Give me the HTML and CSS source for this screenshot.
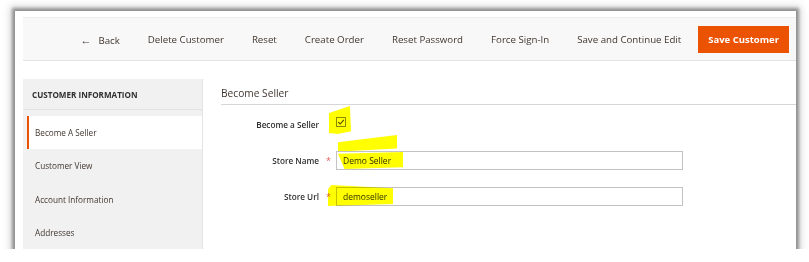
FILE: index.html
```html
<!DOCTYPE html>
<html lang="en">
<head>
    <meta charset="UTF-8">
    <meta name="viewport" content="width=device-width, initial-scale=1.0">
    <title>Customer - Become Seller</title>
    <link rel="stylesheet" href="styles.css">
</head>
<body>
    <div class="frame">
        <div class="page-actions">
            <a class="action back"><span class="arrow">&#8592;</span>Back</a>
            <a class="action">Delete Customer</a>
            <a class="action">Reset</a>
            <a class="action">Create Order</a>
            <a class="action">Reset Password</a>
            <a class="action">Force Sign-In</a>
            <a class="action">Save and Continue Edit</a>
            <button class="primary">Save Customer</button>
        </div>

        <div class="content">
            <div class="sidebar">
                <div class="sidebar-title">Customer Information</div>
                <ul class="tabs">
                    <li class="tab active">Become A Seller</li>
                    <li class="tab">Customer View</li>
                    <li class="tab">Account Information</li>
                    <li class="tab">Addresses</li>
                </ul>
            </div>

            <div class="main">
                <div class="section-title">Become Seller</div>
                <div class="form">
                    <div class="field">
                        <label class="field-label">Become a Seller</label>
                        <span class="req"></span>
                        <span class="checkbox">
                            <svg width="8" height="8" viewBox="0 0 8 8"><path d="M1.2 4.2 L3.2 6 L6.8 1.8" fill="none" stroke="#514943" stroke-width="1.1"/></svg>
                        </span>
                    </div>
                    <div class="field">
                        <label class="field-label">Store Name</label>
                        <span class="req">*</span>
                        <input class="text-input" type="text" value="Demo Seller">
                    </div>
                    <div class="field">
                        <label class="field-label">Store Url</label>
                        <span class="req">*</span>
                        <input class="text-input" type="text" value="demoseller">
                    </div>
                </div>

                <!-- highlighter marks -->
                <div class="mark mark-check"></div>
                <div class="mark mark-stroke"></div>
                <div class="mark mark-name"></div>
                <div class="mark mark-url"></div>
            </div>
        </div>
    </div>
</body>
</html>
```

FILE: styles.css
```css
body {
    margin: 0;
    background-color: #fff;
    font-family: "Open Sans", Arial, sans-serif;
    color: #303030;
}
.frame {
    margin: 11px 0 0 15px;
    width: 781px;
    height: 238px;
    padding: 6px 0 0 8px;
    box-sizing: border-box;
    background-color: #fff;
    overflow: hidden;
    box-shadow: 0 0 3px 3px rgba(0, 0, 0, 0.35), 0 0 8px 5px rgba(0, 0, 0, 0.15);
}
.page-actions {
    height: 44px;
    box-sizing: border-box;
    background-color: #f8f8f8;
    border-top: 1px solid #ececec;
    border-bottom: 1px solid #e3e3e3;
    display: flex;
    align-items: center;
    justify-content: flex-end;
    gap: 28px;
    padding-right: 7px;
}
.action {
    font-size: 9.7px;
    color: #41362f;
    cursor: pointer;
}
.back .arrow {
    margin-right: 7px;
    font-size: 11px;
}
.primary {
    margin-left: -11px;
    height: 27px;
    padding: 0 10px;
    border: none;
    background-color: #eb5202;
    color: #fff;
    font-family: inherit;
    font-size: 9.5px;
    font-weight: 700;
    cursor: pointer;
}
.content {
    display: flex;
    margin-top: 18px;
}
.sidebar {
    width: 180px;
    flex-shrink: 0;
    min-height: 200px;
    background-color: #f1f1f1;
    border-right: 1px solid #e3e3e3;
    box-sizing: border-box;
}
.sidebar-title {
    height: 31px;
    line-height: 31px;
    padding-left: 9px;
    font-size: 8.1px;
    font-weight: 700;
    text-transform: uppercase;
    border-bottom: 1px solid #e3e3e3;
    box-sizing: border-box;
}
.tabs {
    list-style: none;
    margin: 6px 0 0;
    padding: 0;
}
.tab {
    height: 33.3px;
    line-height: 33px;
    padding-left: 12px;
    font-size: 8.2px;
    color: #41362f;
}
.tab.active {
    margin-left: 4px;
    padding-left: 6px;
    background-color: #fff;
    border-left: 2px solid #eb5202;
}
.main {
    position: relative;
    flex: 1;
    padding-left: 18px;
}
.section-title {
    height: 26px;
    padding-top: 2px;
    line-height: 24px;
    box-sizing: border-box;
    font-size: 10.2px;
    color: #41362f;
    border-bottom: 1px solid #d6d6d6;
}
.form {
    display: flex;
    flex-direction: column;
    gap: 16px;
    margin-top: 9px;
}
.field {
    display: flex;
    align-items: center;
    height: 20px;
}
.field-label {
    width: 98px;
    text-align: right;
    font-size: 8.2px;
    font-weight: 600;
    color: #303030;
}
.req {
    width: 17px;
    padding-left: 7px;
    box-sizing: border-box;
    color: #e85a5a;
    font-size: 9px;
}
.checkbox {
    width: 10px;
    height: 10px;
    border: 1px solid #8a8a8a;
    box-sizing: border-box;
    display: flex;
    align-items: center;
    justify-content: center;
    margin-top: -4px;
}
.text-input {
    width: 347px;
    height: 19px;
    box-sizing: border-box;
    border: 1px solid #c2c2c2;
    padding: 0 6px;
    font-family: inherit;
    font-size: 8.5px;
    color: #303030;
}
.mark {
    position: absolute;
    background-color: #ffff00;
    mix-blend-mode: multiply;
}
.mark-check {
    left: 126px;
    top: 27px;
    width: 22px;
    height: 28px;
    clip-path: polygon(0 25%, 95% 0, 100% 90%, 40% 100%, 0 96%);
}
.mark-stroke {
    left: 135px;
    top: 56px;
    width: 59px;
    height: 16px;
    clip-path: polygon(0 45%, 100% 0, 100% 85%, 20% 100%, 0 100%);
}
.mark-name {
    left: 135px;
    top: 73px;
    width: 65px;
    height: 17px;
    clip-path: polygon(0 10%, 100% 0, 100% 90%, 10% 100%);
}
.mark-url {
    left: 125px;
    top: 106px;
    width: 65px;
    height: 21px;
    clip-path: polygon(5% 0, 100% 15%, 100% 90%, 0 100%, 0 20%);
}
```
